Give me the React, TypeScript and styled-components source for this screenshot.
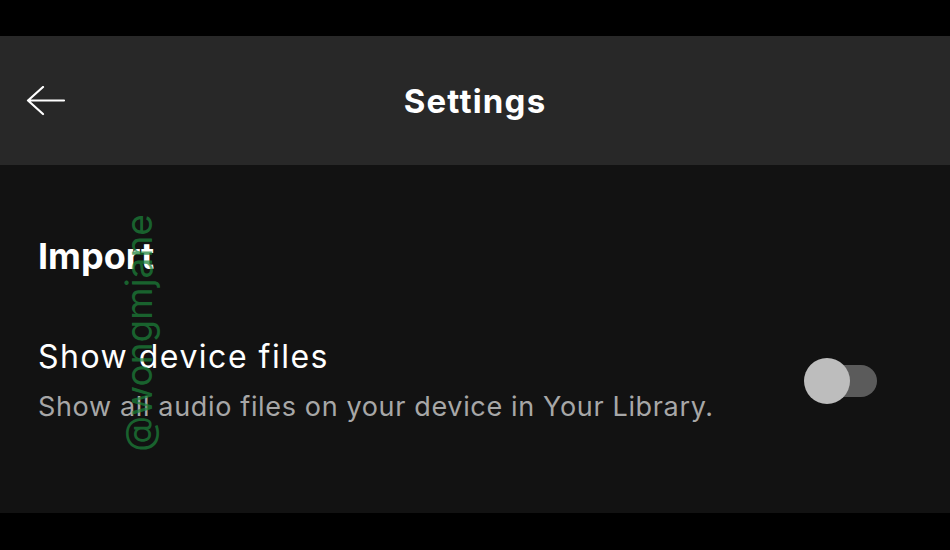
import React from "react";
import styled, { createGlobalStyle } from "styled-components";

const Global = createGlobalStyle`
  html, body { margin: 0; padding: 0; background: #000; }
  body { font-family: Inter, Lato, sans-serif; }
`;

const Page = styled.div`
  width: 950px;
  height: 550px;
  display: flex;
  flex-direction: column;
  background: #000;
  position: relative;
  overflow: hidden;
`;

const StatusBar = styled.div<{ $h: number }>`
  height: ${(p) => p.$h}px;
  flex: none;
  background: #000;
`;

const Header = styled.header`
  height: 129px;
  flex: none;
  background: #282828;
  display: grid;
  grid-template-columns: 120px 1fr 120px;
  align-items: center;
`;

const BackButton = styled.button`
  background: none;
  border: none;
  padding: 0 0 0 26px;
  margin: 0;
  display: flex;
  align-items: center;
  height: 40px;
  cursor: pointer;
`;

const Title = styled.h1`
  margin: 0;
  margin-top: 2px;
  text-align: center;
  color: #fff;
  font-family: Inter, sans-serif;
  font-weight: 700;
  font-size: 33px;
  line-height: 33px;
  letter-spacing: 1.2px;
`;

const Content = styled.main`
  flex: 1;
  background: #121212;
  padding: 73px 73px 0 38px;
  display: flex;
  flex-direction: column;
`;

const SectionTitle = styled.h2`
  margin: 0;
  color: #fff;
  font-family: Inter, sans-serif;
  font-weight: 700;
  font-size: 36px;
  line-height: 36px;
`;

const Row = styled.div`
  margin-top: 67px;
  display: flex;
  align-items: center;
  justify-content: space-between;
`;

const TextBlock = styled.div`
  display: flex;
  flex-direction: column;
  gap: 20px;
`;

const RowTitle = styled.div`
  color: #fff;
  font-family: Inter, sans-serif;
  font-size: 32px;
  line-height: 32px;
  letter-spacing: 1.5px;
`;

const RowSubtitle = styled.div`
  color: #a7a7a7;
  font-family: Inter, sans-serif;
  font-size: 27px;
  line-height: 27px;
  letter-spacing: 0.65px;
`;

const Toggle = styled.div`
  position: relative;
  width: 73px;
  height: 46px;
  flex: none;
`;

const Track = styled.div`
  position: absolute;
  left: 6px;
  top: 7px;
  width: 67px;
  height: 32px;
  border-radius: 16px;
  background: #5b5b5b;
`;

const Knob = styled.div`
  position: absolute;
  left: 0;
  top: 0;
  width: 46px;
  height: 46px;
  border-radius: 50%;
  background: #bdbdbd;
`;

const Watermark = styled.div`
  position: absolute;
  left: 138px;
  top: 333px;
  transform: translate(-50%, -50%) rotate(-90deg);
  color: rgba(28, 130, 58, 0.72);
  font-family: Inter, sans-serif;
  font-size: 37px;
  line-height: 37px;
  white-space: nowrap;
  pointer-events: none;
`;

function BackArrow() {
  return (
    <svg width="40" height="30" viewBox="0 0 40 30" fill="none">
      <path
        d="M2 14.5 H38 M17 1 L2 14.5 L17 28"
        stroke="#fff"
        strokeWidth="2.2"
        strokeLinecap="round"
        strokeLinejoin="round"
      />
    </svg>
  );
}

export default function App() {
  return (
    <>
      <Global />
      <Page>
        <StatusBar $h={36} />
        <Header>
          <BackButton aria-label="Back">
            <BackArrow />
          </BackButton>
          <Title>Settings</Title>
          <div />
        </Header>
        <Content>
          <SectionTitle>Import</SectionTitle>
          <Row>
            <TextBlock>
              <RowTitle>Show device files</RowTitle>
              <RowSubtitle>Show all audio files on your device in Your Library.</RowSubtitle>
            </TextBlock>
            <Toggle role="switch" aria-checked={false}>
              <Track />
              <Knob />
            </Toggle>
          </Row>
        </Content>
        <StatusBar $h={37} />
        <Watermark>@wongmjane</Watermark>
      </Page>
    </>
  );
}
